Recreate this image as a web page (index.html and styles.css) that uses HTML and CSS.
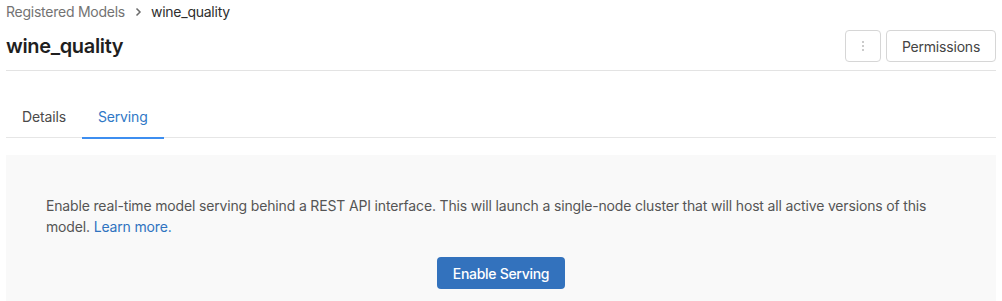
FILE: index.html
```html
<!DOCTYPE html>
<html>
<head>
<meta charset="utf-8">
<link rel="stylesheet" href="styles.css">
</head>
<body>
<div class="page">
  <nav class="breadcrumb">
    <a class="crumb-link">Registered Models</a>
    <svg class="crumb-sep" width="12" height="12" viewBox="0 0 12 12"><path d="M4.5 2.5 L8 6 L4.5 9.5" fill="none" stroke="#6b6b6b" stroke-width="1.5"/></svg>
    <span class="crumb-current">wine_quality</span>
  </nav>
  <header class="header">
    <h1 class="title">wine_quality</h1>
    <div class="actions">
      <button class="btn btn-icon" aria-label="More">
        <svg width="4" height="12" viewBox="0 0 4 12"><circle cx="2" cy="2" r="0.8" fill="#8a8a8a"/><circle cx="2" cy="6" r="0.8" fill="#8a8a8a"/><circle cx="2" cy="10" r="0.8" fill="#8a8a8a"/></svg>
      </button>
      <button class="btn">Permissions</button>
    </div>
  </header>
  <div class="tabs">
    <div class="tab">Details</div>
    <div class="tab active">Serving</div>
  </div>
  <section class="panel">
    <p class="panel-text">Enable real-time model serving behind a REST API interface. This will launch a single-node cluster that will host all active versions of this model. <a class="link">Learn more.</a></p>
    <div class="panel-actions">
      <button class="btn-primary">Enable Serving</button>
    </div>
  </section>
</div>
</body>
</html>
```

FILE: styles.css
```css
* { box-sizing: border-box; }
html, body { margin: 0; padding: 0; background: #fff; }
body {
  font-family: Inter, "Noto Sans", "Liberation Sans", sans-serif;
  color: #333;
  overflow: hidden;
}
.page { padding: 0 6px; }
.breadcrumb {
  display: flex;
  align-items: center;
  gap: 7px;
  height: 20px;
  margin-top: 2px;
  font-size: 14px;
  line-height: 20px;
  letter-spacing: -0.25px;
}
.crumb-link { color: #737373; }
.crumb-current { color: #2e2e2e; }
.crumb-sep { display: block; }
.header {
  display: flex;
  align-items: center;
  justify-content: space-between;
  padding: 8px 0;
  border-bottom: 1px solid #e3e3e3;
}
.title {
  margin: 0;
  font-size: 20px;
  font-weight: 600;
  line-height: 32px;
  color: #1f1f1f;
  letter-spacing: -0.35px;
}
.actions { display: flex; gap: 5px; }
.btn {
  height: 32px;
  width: 110px;
  padding: 0;
  border: 1px solid #d6d6d6;
  border-radius: 4px;
  background: #fff;
  font-family: inherit;
  font-size: 14px;
  letter-spacing: -0.2px;
  color: #444;
}
.btn-icon {
  width: 36px;
  padding: 0;
  display: flex;
  align-items: center;
  justify-content: center;
}
.tabs {
  display: flex;
  margin-top: 26px;
  border-bottom: 1px solid #e6e6e6;
}
.tab {
  position: relative;
  padding: 10px 16px;
  font-size: 14px;
  line-height: 20px;
  letter-spacing: -0.15px;
  color: #4a4a4a;
}
.tab.active { color: #2f78c6; }
.tab.active::after {
  content: "";
  position: absolute;
  left: 0;
  right: 0;
  bottom: -2px;
  height: 2px;
  background: #3d8ef0;
}
.panel {
  margin-top: 17px;
  background: #f9f9f9;
  padding: 40px 40px 40px;
}
.panel-text {
  margin: 0;
  font-size: 14px;
  line-height: 21px;
  letter-spacing: -0.16px;
  color: #555;
}
.link { color: #2f73c0; }
.panel-actions {
  display: flex;
  justify-content: center;
  margin-top: 20px;
}
.btn-primary {
  height: 32px;
  width: 128px;
  border: none;
  border-radius: 4px;
  background: #3372bd;
  color: #fff;
  font-family: inherit;
  font-size: 14px;
  font-weight: 500;
  letter-spacing: -0.3px;
}
```
